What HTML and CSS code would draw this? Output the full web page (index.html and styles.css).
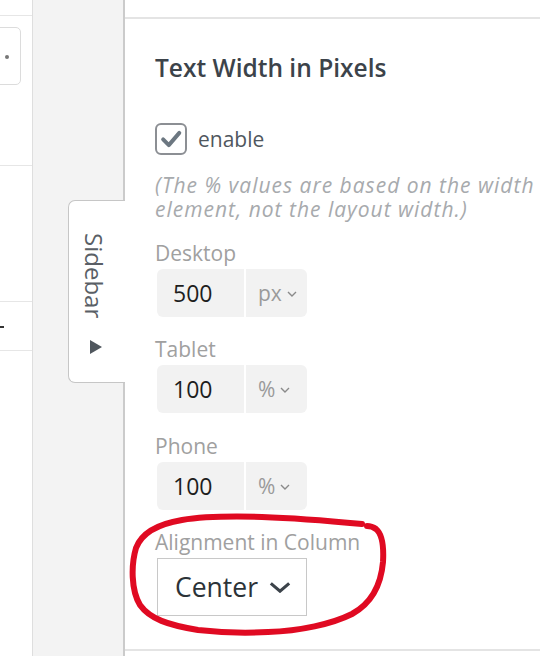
FILE: index.html
```html
<!DOCTYPE html>
<html lang="en">
<head>
<meta charset="utf-8">
<title>Text Width settings</title>
<link rel="stylesheet" href="styles.css">
</head>
<body>
<div class="page">
  <aside class="left-panel">
    <div class="lp-top"></div>
    <div class="lp-box"><span class="lp-dot"></span></div>
    <div class="lp-row lp-row-a"></div>
    <div class="lp-row lp-row-b"><span class="lp-dash"></span></div>
  </aside>
  <div class="strip"></div>
  <main class="main">
    <div class="main-head"></div>
    <section class="content">
      <h2 class="title">Text Width in Pixels</h2>
      <label class="check-row">
        <span class="checkbox">
          <svg viewBox="0 0 32 32" width="28" height="28" aria-hidden="true"><path d="M7 16.5 L13.5 23 L25.5 9" fill="none" stroke="#6c7781" stroke-width="4.5" stroke-linecap="round" stroke-linejoin="round"/></svg>
        </span>
        <span class="check-label">enable</span>
      </label>
      <p class="note"><span class="note-line">(The % values are based on the width of the</span><span class="note-line">element, not the layout width.)</span></p>

      <div class="field">
        <div class="field-label">Desktop</div>
        <div class="input-group">
          <span class="num">500</span>
          <span class="unit">px<svg class="mini-chev" viewBox="0 0 10 6" width="10" height="6"><path d="M1 1 L5 5 L9 1" fill="none" stroke="#8a8a8a" stroke-width="1.4"/></svg></span>
        </div>
      </div>
      <div class="field">
        <div class="field-label">Tablet</div>
        <div class="input-group">
          <span class="num">100</span>
          <span class="unit">%<svg class="mini-chev" viewBox="0 0 10 6" width="10" height="6"><path d="M1 1 L5 5 L9 1" fill="none" stroke="#8a8a8a" stroke-width="1.4"/></svg></span>
        </div>
      </div>
      <div class="field">
        <div class="field-label">Phone</div>
        <div class="input-group">
          <span class="num">100</span>
          <span class="unit">%<svg class="mini-chev" viewBox="0 0 10 6" width="10" height="6"><path d="M1 1 L5 5 L9 1" fill="none" stroke="#8a8a8a" stroke-width="1.4"/></svg></span>
        </div>
      </div>
      <div class="field">
        <div class="field-label">Alignment in Column</div>
        <div class="select">
          <span class="select-text">Center</span>
          <svg class="select-chev" viewBox="0 0 24 12" width="22" height="11"><path d="M2 1.5 L12 10 L22 1.5" fill="none" stroke="#3c434a" stroke-width="3.4" stroke-linejoin="miter"/></svg>
        </div>
      </div>
    </section>
    <div class="main-foot"></div>
  </main>
  <div class="sidebar-tab">
    <span class="tab-text">Sidebar</span>
    <span class="tab-arrow"></span>
  </div>
  <svg class="annotation" viewBox="0 0 540 656" width="540" height="656" aria-hidden="true">
    <path d="M362 524 C330 521 292 518 262 517 C228 516 200 517 182 520 C158 524 142 532 136 548 C131 565 131 590 140 605 C150 619 168 625 198 630 C225 633 250 633 268 632 C300 631 332 624 352 614 C372 603 381 585 383 562 C384 545 382 534 376 529 C372 526 369 526 367 526" fill="none" stroke="#e00a22" stroke-width="6" stroke-linecap="round" stroke-linejoin="round"/>
  </svg>
</div>
</body>
</html>
```

FILE: styles.css
```css
* { box-sizing: border-box; }
html, body { margin: 0; padding: 0; }
body {
  width: 540px;
  height: 656px;
  overflow: hidden;
  background: #ffffff;
  font-family: "Open Sans", "Noto Sans", sans-serif;
}
.page {
  position: relative;
  display: flex;
  width: 540px;
  height: 656px;
  overflow: hidden;
}

/* left panel */
.left-panel {
  width: 33px;
  flex: 0 0 33px;
  border-right: 1px solid #dedede;
  background: #fff;
  display: flex;
  flex-direction: column;
}
.lp-top {
  height: 16px;
  border-bottom: 1px solid #e6e6e6;
}
.lp-box {
  margin-top: 11px;
  margin-left: -10px;
  width: 31px;
  height: 58px;
  border: 1.5px solid #dcdcdc;
  border-radius: 5px;
  display: flex;
  align-items: center;
  justify-content: flex-end;
  padding-right: 11px;
}
.lp-dot {
  width: 4px;
  height: 4px;
  border-radius: 50%;
  background: #777;
  margin-top: 2px;
}
.lp-row-a {
  margin-top: 80px;
  height: 1px;
  background: #e6e6e6;
}
.lp-row-b {
  margin-top: 135px;
  height: 50px;
  border-top: 1px solid #e6e6e6;
  border-bottom: 1px solid #e6e6e6;
  display: flex;
  align-items: center;
}
.lp-dash {
  width: 4px;
  height: 2px;
  background: #333;
  margin-top: 2px;
}

/* grey strip */
.strip {
  flex: 0 0 92px;
  background: #f3f3f3;
  border-right: 2px solid #cbcbcb;
}

/* main panel */
.main {
  flex: 1 1 auto;
  display: flex;
  flex-direction: column;
  min-width: 0;
  overflow: hidden;
}
.main-head {
  height: 19px;
  flex: 0 0 19px;
  border-bottom: 2px solid #e4e4e4;
}
.content {
  padding: 34.5px 0 0 30px;
  height: 630px;
  flex: 0 0 630px;
}
.main-foot {
  border-top: 2px solid #e4e4e4;
  flex: 1 1 auto;
}
.title {
  margin: 0;
  font-size: 24.5px;
  line-height: 28px;
  font-weight: 600;
  color: #3c434a;
}
.check-row {
  margin-top: 41px;
  display: flex;
  align-items: center;
  gap: 11px;
  height: 32px;
}
.checkbox {
  width: 32px;
  height: 32px;
  border: 2px solid #8c8f94;
  border-radius: 6px;
  display: flex;
  align-items: center;
  justify-content: center;
}
.check-label {
  font-size: 21px;
  color: #50575e;
  margin-top: 1px;
}
.note {
  margin: 18px 0 0 0;
  font-size: 21px;
  line-height: 24px;
  letter-spacing: 1px;
  font-style: italic;
  color: #a7aaad;
  white-space: nowrap;
}
.note-line {
  display: block;
}
.field {
  margin-top: 20px;
}
.field + .field {
  margin-top: 20.5px;
}
.field-label {
  font-size: 21px;
  line-height: 24px;
  color: #a0a0a0;
  margin-bottom: 4px;
}
.input-group {
  margin-left: 2px;
  width: 150px;
  height: 48px;
  display: flex;
  gap: 2px;
}
.num {
  flex: 0 0 87px;
  background: #f2f2f2;
  border-radius: 6px 0 0 6px;
  font-size: 23px;
  color: #1e1e1e;
  display: flex;
  align-items: center;
  padding-left: 16px;
}
.unit {
  flex: 1 1 auto;
  background: #f2f2f2;
  border-radius: 0 6px 6px 0;
  font-size: 21px;
  color: #9a9a9a;
  display: flex;
  align-items: center;
  padding-left: 12px;
  gap: 5px;
}
.mini-chev { margin-top: 2px; }
.select {
  margin-left: 2px;
  width: 150px;
  height: 58px;
  border: 1px solid #c8c8c8;
  display: flex;
  align-items: center;
  padding-left: 17px;
  gap: 11px;
}
.select-text {
  font-size: 26.5px;
  color: #2c3338;
}

/* sidebar tab overlay */
.sidebar-tab {
  position: absolute;
  left: 68px;
  top: 200px;
  width: 57px;
  height: 183px;
  background: #fff;
  border: 1.5px solid #c6c6c6;
  border-right: none;
  border-radius: 7px 0 0 7px;
  display: flex;
  flex-direction: column;
  align-items: center;
  padding-top: 32px;
  padding-right: 6px;
}
.tab-text {
  writing-mode: vertical-rl;
  font-size: 24px;
  line-height: 26px;
  color: #5a5f66;
}
.tab-arrow {
  margin-top: 22px;
  width: 0;
  height: 0;
  border-top: 7.5px solid transparent;
  border-bottom: 7.5px solid transparent;
  border-left: 12px solid #50575e;
  margin-left: 4px;
}

.annotation {
  position: absolute;
  left: 0;
  top: 0;
  pointer-events: none;
}
```
